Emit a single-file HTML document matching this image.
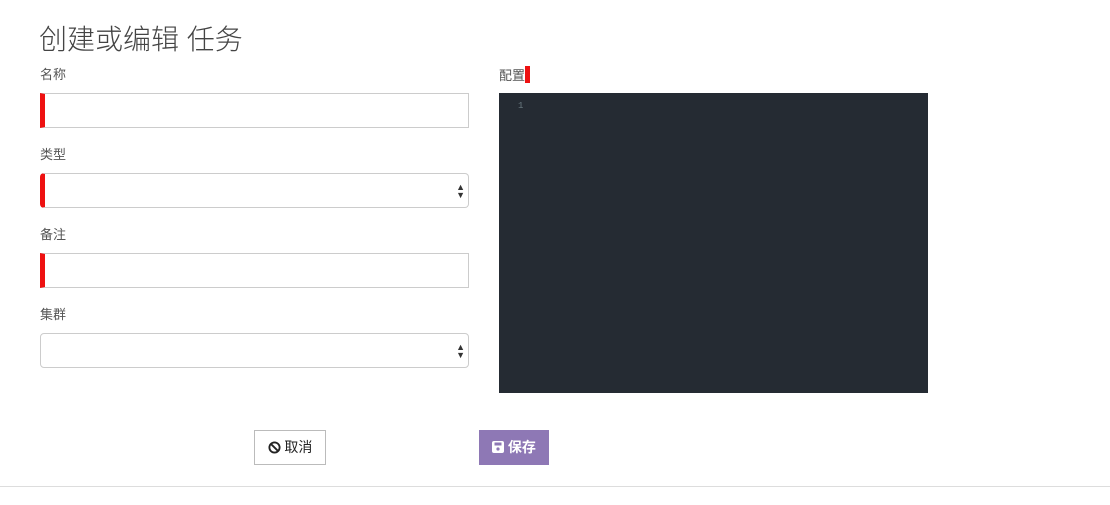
<!DOCTYPE html>
<html><head><meta charset="utf-8"><style>
body{margin:0;width:1110px;height:505px;background:#fff;font-family:"Liberation Sans","Noto Sans CJK SC",sans-serif;color:#444;position:relative;overflow:hidden}
.a{position:absolute}
h1{position:absolute;left:39px;top:20px;margin:0;font-size:28px;font-weight:300;color:#444;line-height:40px}
.lbl{position:absolute;font-size:13px;color:#555;line-height:18px}
.inp{position:absolute;left:40px;border:1px solid #ccc;border-left:5px solid #e11;box-sizing:border-box;width:429px;height:35px}
.sel{border-radius:4px}
.arr{position:absolute;right:3px;top:9px;font-size:9px;line-height:8px;color:#333}
</style></head><body>
<h1>创建或编辑 任务</h1>
<div class="lbl" style="left:40px;top:66px">名称</div>
<div class="inp" style="top:93px"></div>
<div class="lbl" style="left:40px;top:146px">类型</div>
<div class="inp sel" style="top:173px"><div class="arr">▲<br>▼</div></div>
<div class="lbl" style="left:40px;top:226px">备注</div>
<div class="inp" style="top:253px"></div>
<div class="lbl" style="left:40px;top:306px">集群</div>
<div class="inp sel" style="top:333px;border-left:1px solid #ccc"><div class="arr">▲<br>▼</div></div>
<div class="lbl" style="left:499px;top:66px">配置<span style="display:inline-block;width:5px;height:17px;background:#e11;vertical-align:-3px"></span></div>
<div class="a" style="left:499px;top:93px;width:429px;height:300px;background:#252b33"><div style="position:absolute;left:19px;top:8px;font:9px 'Liberation Mono',monospace;color:#6a7a80">1</div></div>
<div class="a" style="left:254px;top:430px;width:70px;height:33px;border:1px solid #bbb;font-size:14px;color:#222;line-height:33px;text-align:center">
<svg width="13" height="13" viewBox="0 0 14 14" style="vertical-align:-2px"><circle cx="7" cy="7" r="5.5" fill="none" stroke="#222" stroke-width="2"/><path d="M3 3L11 11" stroke="#222" stroke-width="2"/></svg> 取消</div>
<div class="a" style="left:479px;top:430px;width:70px;height:35px;background:#8e78b5;font-size:14px;color:#fff;line-height:35px;text-align:center;font-weight:bold">
<svg width="12" height="12" viewBox="0 0 12 12" style="vertical-align:-1px"><rect x="0" y="0" width="12" height="12" rx="2" fill="#fff"/><rect x="2.5" y="1.5" width="7" height="3" fill="#8e78b5"/><circle cx="6" cy="8" r="1.6" fill="#8e78b5"/></svg> 保存</div>
<div class="a" style="left:0;top:486px;width:1110px;height:1px;background:#ddd"></div>
</body></html>
